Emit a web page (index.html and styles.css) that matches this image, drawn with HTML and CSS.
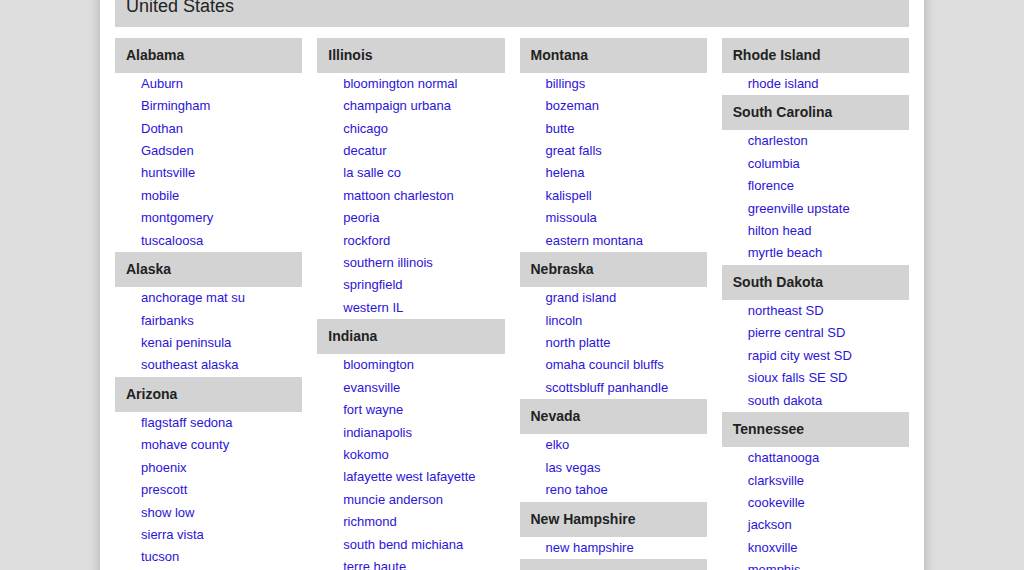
FILE: index.html
```html
<!DOCTYPE html>
<html lang="en">
<head>
<meta charset="utf-8">
<title>craigslist: United States</title>
<link rel="stylesheet" href="styles.css">
</head>
<body>
<div class="panel">
  <div class="country">United States</div>
  <div class="cols">
    <div class="col">
      <h4>Alabama</h4>
      <ul>
        <li><a href="#">Auburn</a></li>
        <li><a href="#">Birmingham</a></li>
        <li><a href="#">Dothan</a></li>
        <li><a href="#">Gadsden</a></li>
        <li><a href="#">huntsville</a></li>
        <li><a href="#">mobile</a></li>
        <li><a href="#">montgomery</a></li>
        <li><a href="#">tuscaloosa</a></li>
      </ul>
      <h4>Alaska</h4>
      <ul>
        <li><a href="#">anchorage mat su</a></li>
        <li><a href="#">fairbanks</a></li>
        <li><a href="#">kenai peninsula</a></li>
        <li><a href="#">southeast alaska</a></li>
      </ul>
      <h4>Arizona</h4>
      <ul>
        <li><a href="#">flagstaff sedona</a></li>
        <li><a href="#">mohave county</a></li>
        <li><a href="#">phoenix</a></li>
        <li><a href="#">prescott</a></li>
        <li><a href="#">show low</a></li>
        <li><a href="#">sierra vista</a></li>
        <li><a href="#">tucson</a></li>
        <li><a href="#">yuma</a></li>
      </ul>
    </div>
    <div class="col">
      <h4>Illinois</h4>
      <ul>
        <li><a href="#">bloomington normal</a></li>
        <li><a href="#">champaign urbana</a></li>
        <li><a href="#">chicago</a></li>
        <li><a href="#">decatur</a></li>
        <li><a href="#">la salle co</a></li>
        <li><a href="#">mattoon charleston</a></li>
        <li><a href="#">peoria</a></li>
        <li><a href="#">rockford</a></li>
        <li><a href="#">southern illinois</a></li>
        <li><a href="#">springfield</a></li>
        <li><a href="#">western IL</a></li>
      </ul>
      <h4>Indiana</h4>
      <ul>
        <li><a href="#">bloomington</a></li>
        <li><a href="#">evansville</a></li>
        <li><a href="#">fort wayne</a></li>
        <li><a href="#">indianapolis</a></li>
        <li><a href="#">kokomo</a></li>
        <li><a href="#">lafayette west lafayette</a></li>
        <li><a href="#">muncie anderson</a></li>
        <li><a href="#">richmond</a></li>
        <li><a href="#">south bend michiana</a></li>
        <li><a href="#">terre haute</a></li>
      </ul>
    </div>
    <div class="col">
      <h4>Montana</h4>
      <ul>
        <li><a href="#">billings</a></li>
        <li><a href="#">bozeman</a></li>
        <li><a href="#">butte</a></li>
        <li><a href="#">great falls</a></li>
        <li><a href="#">helena</a></li>
        <li><a href="#">kalispell</a></li>
        <li><a href="#">missoula</a></li>
        <li><a href="#">eastern montana</a></li>
      </ul>
      <h4>Nebraska</h4>
      <ul>
        <li><a href="#">grand island</a></li>
        <li><a href="#">lincoln</a></li>
        <li><a href="#">north platte</a></li>
        <li><a href="#">omaha council bluffs</a></li>
        <li><a href="#">scottsbluff panhandle</a></li>
      </ul>
      <h4>Nevada</h4>
      <ul>
        <li><a href="#">elko</a></li>
        <li><a href="#">las vegas</a></li>
        <li><a href="#">reno tahoe</a></li>
      </ul>
      <h4>New Hampshire</h4>
      <ul>
        <li><a href="#">new hampshire</a></li>
      </ul>
      <h4>New Jersey</h4>
      <ul>
        <li><a href="#">central NJ</a></li>
      </ul>
    </div>
    <div class="col">
      <h4>Rhode Island</h4>
      <ul>
        <li><a href="#">rhode island</a></li>
      </ul>
      <h4>South Carolina</h4>
      <ul>
        <li><a href="#">charleston</a></li>
        <li><a href="#">columbia</a></li>
        <li><a href="#">florence</a></li>
        <li><a href="#">greenville upstate</a></li>
        <li><a href="#">hilton head</a></li>
        <li><a href="#">myrtle beach</a></li>
      </ul>
      <h4>South Dakota</h4>
      <ul>
        <li><a href="#">northeast SD</a></li>
        <li><a href="#">pierre central SD</a></li>
        <li><a href="#">rapid city west SD</a></li>
        <li><a href="#">sioux falls SE SD</a></li>
        <li><a href="#">south dakota</a></li>
      </ul>
      <h4>Tennessee</h4>
      <ul>
        <li><a href="#">chattanooga</a></li>
        <li><a href="#">clarksville</a></li>
        <li><a href="#">cookeville</a></li>
        <li><a href="#">jackson</a></li>
        <li><a href="#">knoxville</a></li>
        <li><a href="#">memphis</a></li>
        <li><a href="#">nashville</a></li>
      </ul>
    </div>
  </div>
</div>
</body>
</html>
```

FILE: styles.css
```css
html, body {
  margin: 0;
  padding: 0;
}

body {
  background: #dedede;
  font-family: "Liberation Sans", Arial, Helvetica, sans-serif;
  color: #222;
  overflow: hidden;
}

.panel {
  width: 794px;
  margin: -30px auto 0;
  padding: 15px;
  background: #fff;
  box-shadow: 0 0 12px rgba(0, 0, 0, 0.22);
}

.country {
  background: #d3d3d3;
  font-size: 18px;
  line-height: 24px;
  padding: 9px 11px;
  margin-bottom: 10.5px;
  color: #222;
}

.cols {
  display: flex;
  gap: 15px;
}

.col {
  flex: 1 1 0;
  min-width: 0;
}

.col h4 {
  margin: 0;
  background: #d3d3d3;
  height: 35.2px;
  line-height: 35.2px;
  padding: 0 11px;
  font-size: 14px;
  font-weight: bold;
  color: #222;
}

.col ul {
  list-style: none;
  margin: 0;
  padding: 0 0 0 26px;
}

.col li {
  font-size: 13px;
  line-height: 22.4px;
}

.col a {
  color: #2b14d8;
  text-decoration: none;
}
```
